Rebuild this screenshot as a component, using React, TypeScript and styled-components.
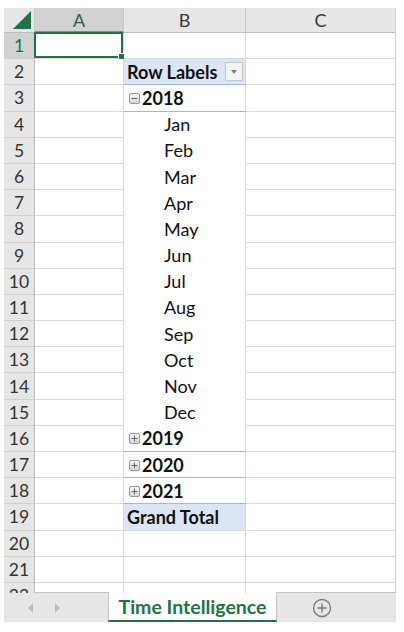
import React from 'react';
import styled, { createGlobalStyle, css } from 'styled-components';

const GlobalStyle = createGlobalStyle`
  html, body {
    margin: 0;
    padding: 0;
    background: #ffffff;
  }
  body {
    font-family: Lato, "Open Sans", "Liberation Sans", sans-serif;
  }
`;

// sheet geometry
const ROW_H = 26.2;
const COLS = '31px 89px 122px 150px';
const GREEN = '#217346';
const PIVOT_BG = '#dce6f2';
const PIVOT_LINE = '#9db9df';

const Page = styled.div`
  padding: 8px 8px 0 4px;
  width: 392px;
`;

const GridArea = styled.div`
  height: 585px;
  overflow: hidden;
  border-right: 1px solid #d0d0d0;
`;

const Grid = styled.div`
  display: grid;
  grid-template-columns: ${COLS};
  grid-template-rows: 25px;
  grid-auto-rows: ${ROW_H}px;
`;

const Corner = styled.div`
  background: #e6e6e6;
  border-right: 1px solid #c8c8c8;
  border-bottom: 1px solid #bdbdbd;
  display: flex;
  align-items: flex-end;
  justify-content: flex-end;
  padding: 0 3px 3px 0;
  box-sizing: border-box;
`;

const ColHead = styled.div<{ $active?: boolean }>`
  background: ${(p) => (p.$active ? '#d2d2d2' : '#e6e6e6')};
  border-right: 1px solid #c8c8c8;
  border-bottom: ${(p) => (p.$active ? '2px solid #8a8a8a' : '1px solid #bdbdbd')};
  box-sizing: border-box;
  display: flex;
  align-items: center;
  justify-content: center;
  font-size: 18px;
  color: ${(p) => (p.$active ? '#2f5e43' : '#3a3a3a')};
`;

const RowHead = styled.div<{ $active?: boolean }>`
  background: ${(p) => (p.$active ? '#d2d2d2' : '#e6e6e6')};
  border-right: 1px solid #bdbdbd;
  border-bottom: 1px solid #cfcfcf;
  box-sizing: border-box;
  display: flex;
  align-items: center;
  justify-content: center;
  font-size: 17.5px;
  color: ${(p) => (p.$active ? GREEN : '#333333')};
`;

type Variant = 'plain' | 'header' | 'year' | 'month' | 'total' | 'open';

const Cell = styled.div<{ $variant?: Variant }>`
  position: relative;
  box-sizing: border-box;
  border-right: 1px solid #d9d9d9;
  border-bottom: 1px solid #d9d9d9;
  display: flex;
  align-items: center;
  font-size: 18px;
  color: #111111;
  white-space: nowrap;
  ${(p) =>
    p.$variant === 'header' &&
    css`
      background: ${PIVOT_BG};
      border-bottom-color: ${PIVOT_LINE};
      font-weight: 700;
      padding-left: 3px;
      justify-content: space-between;
      padding-right: 2px;
    `}
  ${(p) =>
    (p.$variant === 'year' || p.$variant === 'open') &&
    css`
      border-bottom-color: ${PIVOT_LINE};
      font-weight: 700;
      padding-left: 5px;
      gap: 2px;
    `}
  ${(p) =>
    p.$variant === 'month' &&
    css`
      border-bottom-color: transparent;
      padding-left: 40px;
    `}
  ${(p) =>
    p.$variant === 'total' &&
    css`
      background: ${PIVOT_BG};
      border-top: 1px solid ${PIVOT_LINE};
      margin-top: -1px;
      font-weight: 700;
      padding-left: 3px;
    `}
`;

const Selection = styled.div`
  position: absolute;
  inset: -1px 0 0 -1px;
  border: 2px solid ${GREEN};
  pointer-events: none;

  &::after {
    content: '';
    position: absolute;
    right: -4px;
    bottom: -4px;
    width: 5px;
    height: 5px;
    background: ${GREEN};
    border: 1px solid #ffffff;
  }
`;

const FilterButton = styled.div`
  width: 18px;
  height: 19px;
  box-sizing: border-box;
  border: 1px solid #c6c6c6;
  background: #f4f4f4;
  display: flex;
  align-items: center;
  justify-content: center;

  &::before {
    content: '';
    border-left: 3.5px solid transparent;
    border-right: 3.5px solid transparent;
    border-top: 4px solid #808080;
  }
`;

const ExpandBox = styled.span`
  display: inline-flex;
  width: 11px;
  height: 11px;
  box-sizing: border-box;
  border: 1px solid #9a9a9a;
  border-radius: 2px;
  background: linear-gradient(#f6f6f6, #d6d6d6);
  align-items: center;
  justify-content: center;
  margin-top: 1px;
`;

const TabBar = styled.div`
  height: 30px;
  background: #e6e6e6;
  border-top: 1px solid #c4c4c4;
  box-sizing: border-box;
  display: flex;
  align-items: stretch;
  margin-top: -1px;
`;

const NavArea = styled.div`
  width: 104px;
  display: flex;
  align-items: center;
  gap: 22px;
  padding-left: 24px;
  box-sizing: border-box;
`;

const NavArrow = styled.span<{ $dir: 'left' | 'right' }>`
  width: 0;
  height: 0;
  border-top: 5px solid transparent;
  border-bottom: 5px solid transparent;
  ${(p) =>
    p.$dir === 'left'
      ? css`border-right: 5px solid #bcbcbc;`
      : css`border-left: 5px solid #bcbcbc;`}
`;

const SheetTab = styled.div`
  width: 169px;
  margin-top: -1px;
  background: #ffffff;
  border-bottom: 2px solid ${GREEN};
  border-left: 1px solid #c4c4c4;
  border-right: 1px solid #c4c4c4;
  box-sizing: border-box;
  display: flex;
  align-items: center;
  justify-content: center;
  color: ${GREEN};
  font-weight: 700;
  font-size: 19.5px;
`;

const AddArea = styled.div`
  width: 90px;
  display: flex;
  align-items: center;
  justify-content: center;
`;

const MinusIcon = () => (
  <svg width="7" height="7" viewBox="0 0 7 7">
    <path d="M0.5 3.5h6" stroke="#666" strokeWidth="1" />
  </svg>
);

const PlusIcon = () => (
  <svg width="7" height="7" viewBox="0 0 7 7">
    <path d="M0.5 3.5h6M3.5 0.5v6" stroke="#666" strokeWidth="1" />
  </svg>
);

const CornerTriangle = () => (
  <svg width="18" height="18" viewBox="0 0 18 18">
    <path d="M18 0L18 18L0 18Z" fill={GREEN} />
  </svg>
);

const AddSheetIcon = () => (
  <svg width="20" height="20" viewBox="0 0 20 20">
    <circle cx="10" cy="10" r="8.5" fill="none" stroke="#7a7a7a" strokeWidth="1.3" />
    <path d="M10 5.5v9M5.5 10h9" stroke="#7a7a7a" strokeWidth="1.3" />
  </svg>
);

const months = ['Jan', 'Feb', 'Mar', 'Apr', 'May', 'Jun', 'Jul', 'Aug', 'Sep', 'Oct', 'Nov', 'Dec'];

type RowDef = { b?: React.ReactNode; variant?: Variant };

const rows: RowDef[] = [
  {},
  {
    variant: 'header',
    b: (
      <>
        <span>Row Labels</span>
        <FilterButton />
      </>
    ),
  },
  {
    variant: 'year',
    b: (
      <>
        <ExpandBox>
          <MinusIcon />
        </ExpandBox>
        2018
      </>
    ),
  },
  ...months.map((m) => ({ variant: 'month' as Variant, b: m })),
  ...['2019', '2020', '2021'].map((y) => ({
    variant: 'open' as Variant,
    b: (
      <>
        <ExpandBox>
          <PlusIcon />
        </ExpandBox>
        {y}
      </>
    ),
  })),
  { variant: 'total', b: 'Grand Total' },
  {},
  {},
  {},
];

const App: React.FC = () => {
  return (
    <Page>
      <GlobalStyle />
      <GridArea>
        <Grid>
          <Corner>
            <CornerTriangle />
          </Corner>
          <ColHead $active>A</ColHead>
          <ColHead>B</ColHead>
          <ColHead>C</ColHead>
          {rows.map((row, i) => (
            <React.Fragment key={i}>
              <RowHead $active={i === 0}>{i + 1}</RowHead>
              <Cell>{i === 0 && <Selection />}</Cell>
              <Cell $variant={row.variant}>{row.b}</Cell>
              <Cell />
            </React.Fragment>
          ))}
        </Grid>
      </GridArea>
      <TabBar>
        <NavArea>
          <NavArrow $dir="left" />
          <NavArrow $dir="right" />
        </NavArea>
        <SheetTab>Time Intelligence</SheetTab>
        <AddArea>
          <AddSheetIcon />
        </AddArea>
      </TabBar>
    </Page>
  );
};

export default App;
